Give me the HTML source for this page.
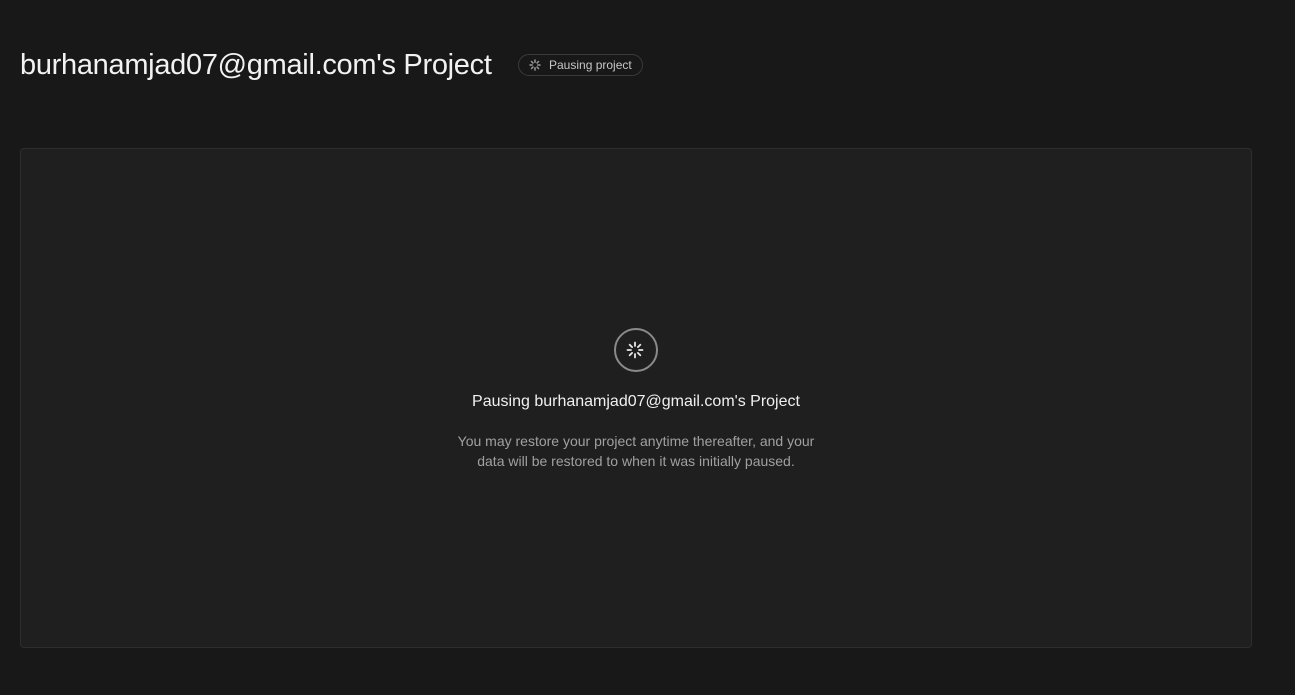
<!DOCTYPE html>
<html><head><style>
html,body{margin:0;padding:0;background:#181818;width:1295px;height:695px;overflow:hidden;font-family:"Liberation Sans",sans-serif;}
h1{position:absolute;left:20px;top:49px;margin:0;font-size:29px;font-weight:400;color:#f2f2f2;letter-spacing:-0.3px;}
.badge{position:absolute;left:518px;top:54px;width:123px;height:20px;border:1px solid #3a3a3a;border-radius:11px;box-sizing:content-box;color:#c8c8c8;font-size:12px;line-height:20px;}
.badge span{position:absolute;left:30px;}
.badge svg{position:absolute;left:10px;top:4px;}
.card{position:absolute;left:20px;top:148px;width:1230px;height:498px;background:#1f1f1f;border:1px solid #2e2e2e;border-radius:4px;}
.ring{position:absolute;left:614px;top:328px;width:40px;height:40px;border:2.5px solid #8a8a8a;border-radius:50%;}
.t{position:absolute;left:21px;width:1230px;text-align:center;}
</style></head><body>
<h1>burhanamjad07@gmail.com's Project</h1>
<div class="badge"><svg width="12" height="12" viewBox="0 0 12 12" stroke="#9a9a9a" stroke-width="1.5" stroke-linecap="round"><path d="M6 1v2.2M6 8.8V11M1 6h2.2M8.8 6H11M2.5 2.5l1.5 1.5M8 8l1.5 1.5M2.5 9.5L4 8M8 4l1.5-1.5"/></svg><span>Pausing project</span></div>
<div class="card"></div>
<div class="ring"></div>
<svg style="position:absolute;left:625px;top:340px" width="20" height="20" viewBox="0 0 20 20" stroke="#e8e8e8" stroke-width="1.8" stroke-linecap="round"><path d="M10 2.5v3.5M10 14v3.5M2.5 10h3.5M14 10h3.5M4.7 4.7l2.4 2.4M12.9 12.9l2.4 2.4M4.7 15.3l2.4-2.4M12.9 7.1l2.4-2.4"/></svg>
<div class="t" style="top:393px;font-size:16px;color:#f0f0f0;">Pausing burhanamjad07@gmail.com's Project</div>
<div class="t" style="top:431px;font-size:14px;line-height:20px;color:#a0a0a0;">You may restore your project anytime thereafter, and your<br>data will be restored to when it was initially paused.</div>
</body></html>
